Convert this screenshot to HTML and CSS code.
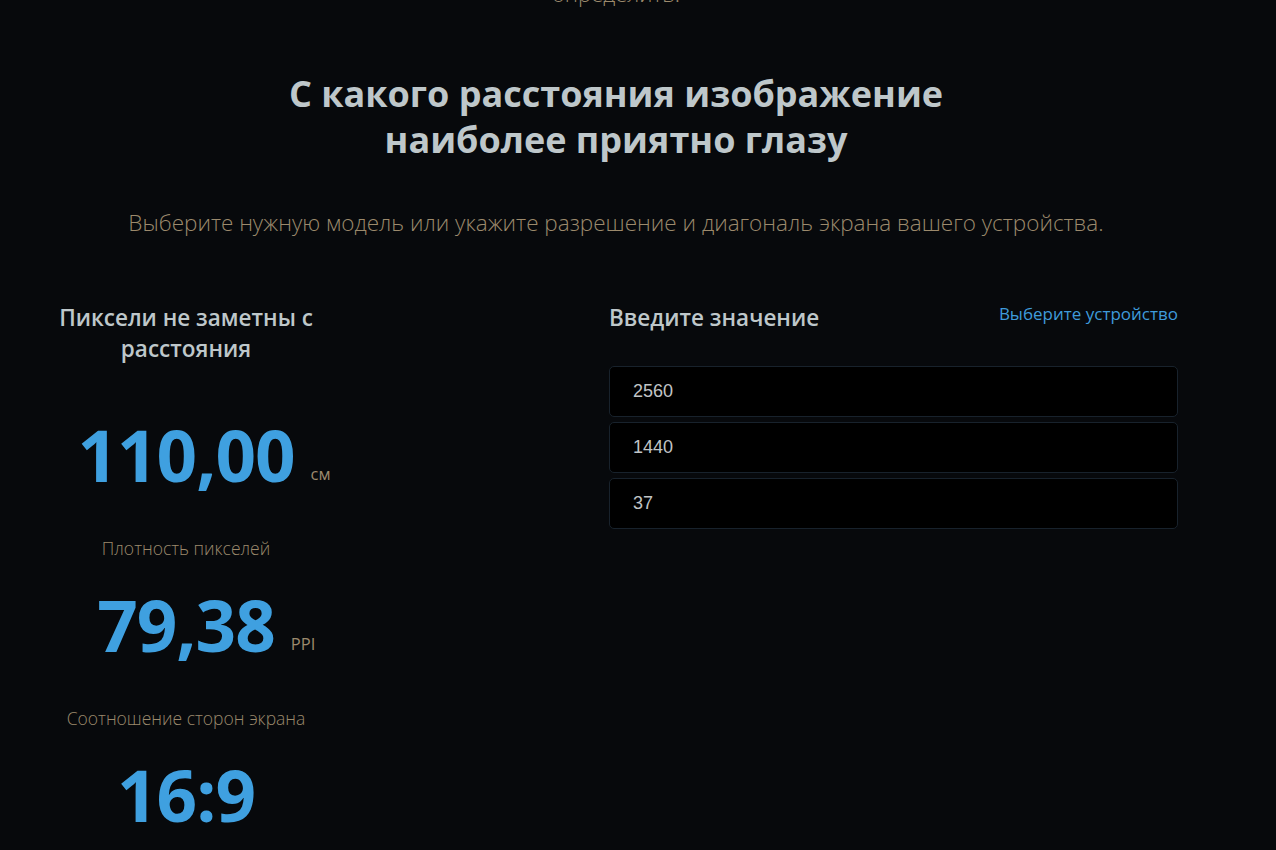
FILE: index.html
```html
<!DOCTYPE html>
<html lang="ru">
<head>
<meta charset="utf-8">
<title>Калькулятор расстояния</title>
<link rel="stylesheet" href="styles.css">
</head>
<body>
<div class="page">
  <p class="prev">определить.</p>
  <h1 class="title">С какого расстояния изображение<br>наиболее приятно глазу</h1>
  <p class="lead">Выберите нужную модель или укажите разрешение и диагональ экрана вашего устройства.</p>
  <div class="row">
    <div class="results">
      <h3 class="res-title">Пиксели не заметны с расстояния</h3>
      <div class="metric first"><span class="num">110,00<span class="unit">см</span></span></div>
      <div class="label">Плотность пикселей</div>
      <div class="metric"><span class="num">79,38<span class="unit">PPI</span></span></div>
      <div class="label">Соотношение сторон экрана</div>
      <div class="metric"><span class="num">16:9</span></div>
    </div>
    <div class="form">
      <div class="form-head">
        <h3 class="form-title">Введите значение</h3>
        <a class="device-link" href="#">Выберите устройство</a>
      </div>
      <div class="inputs">
        <input class="field" type="text" value="2560">
        <input class="field" type="text" value="1440">
        <input class="field" type="text" value="37">
      </div>
    </div>
  </div>
</div>
</body>
</html>
```
FILE: styles.css
```css
html, body {
  margin: 0;
  padding: 0;
  background: #07090c;
  height: 100%;
  overflow: hidden;
}
body {
  font-family: "Open Sans", "Noto Sans", sans-serif;
  color: #c3cacd;
}
.page {
  width: 1124px;
  margin-left: 54px;
}
.prev {
  margin: -20px 0 0;
  text-align: center;
  font-weight: 300;
  font-size: 22px;
  line-height: 26px;
  color: #9c8a6c;
}
.title {
  margin: 65px 0 0;
  text-align: center;
  font-size: 36px;
  line-height: 46px;
  font-weight: 700;
  color: #bec7ca;
}
.lead {
  margin: 45px 0 0;
  text-align: center;
  font-size: 22.5px;
  font-weight: 300;
  line-height: 30px;
  color: #9c8a6c;
}
.row {
  display: flex;
  margin-top: 58px;
  justify-content: space-between;
}
.results {
  width: 264px;
  text-align: center;
}
.res-title {
  margin: 6px 0 0;
  font-size: 22.5px;
  font-weight: 600;
  line-height: 31px;
  color: #bec7ca;
}
.metric {
  margin-top: 20px;
}
.metric.first {
  margin-top: 46px;
}
.num {
  position: relative;
  display: inline-block;
  font-size: 71px;
  font-weight: 700;
  line-height: 90px;
  color: #3fa0e0;
  letter-spacing: -1px;
}
.unit {
  position: absolute;
  left: 100%;
  bottom: 16px;
  margin-left: 16px;
  font-size: 16.5px;
  font-weight: 400;
  line-height: 20px;
  letter-spacing: 0;
  color: #9c8a6c;
}
.label {
  margin-top: 36px;
  font-size: 17.5px;
  font-weight: 300;
  line-height: 24px;
  color: #9c8a6c;
}
.form {
  width: 569px;
}
.form-head {
  display: flex;
  justify-content: space-between;
  align-items: flex-start;
}
.form-title {
  margin: 6px 0 0;
  font-size: 22.5px;
  font-weight: 600;
  line-height: 31px;
  color: #bec7ca;
}
.device-link {
  margin-top: 5px;
  font-size: 17px;
  line-height: 26px;
  color: #3f9bdb;
  text-decoration: none;
}
.inputs {
  margin-top: 33px;
  display: flex;
  flex-direction: column;
  gap: 5px;
}
.field {
  box-sizing: border-box;
  height: 51px;
  width: 100%;
  margin: 0;
  padding: 0 23px;
  background: #000;
  border: 1px solid #18222c;
  border-radius: 5px;
  font-family: "Liberation Sans", Arial, sans-serif;
  font-size: 18px;
  color: #c0c4c6;
  outline: none;
}
```
